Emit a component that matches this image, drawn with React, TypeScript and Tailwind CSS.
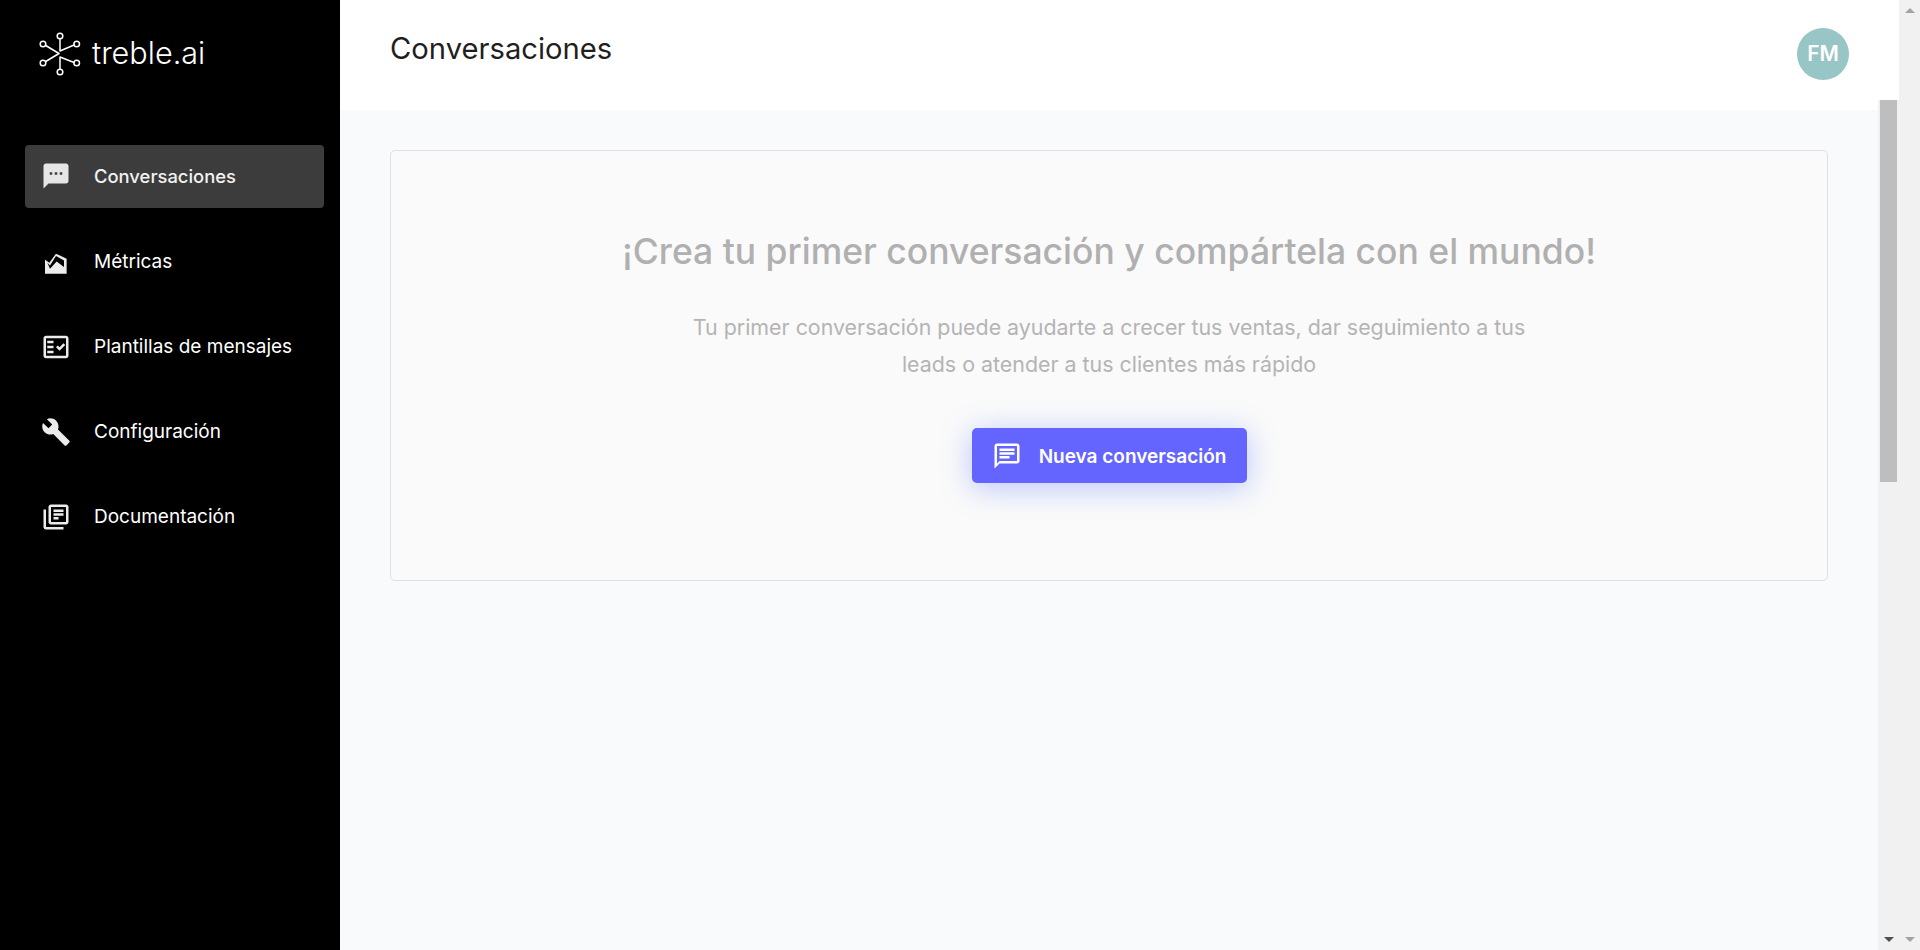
const FONT = "font-['Inter',sans-serif]";

function TrebleLogo() {
  const nodes = [
    [22, 6], [38.7, 14], [38.7, 33], [22, 42], [5, 33], [5, 14],
  ];
  return (
    <svg width="44" height="48" viewBox="0 0 44 48" fill="none" stroke="white" strokeWidth="1.5">
      {nodes.map(([x, y]) => (
        <circle key={`${x}-${y}`} cx={x} cy={y} r="2.8" />
      ))}
      <path d="M22 9v12l14-6M7.7 15.5L21 23.5L7.7 31.5M22 39V27l14 5.5" strokeLinecap="round" strokeLinejoin="round" />
    </svg>
  );
}

function SmsIcon({ className }: { className?: string }) {
  return (
    <svg viewBox="0 0 24 24" className={className} fill="currentColor">
      <path d="M20 2H4c-1.1 0-1.99.9-1.99 2L2 22l4-4h14c1.1 0 2-.9 2-2V4c0-1.1-.9-2-2-2zM9 11H7V9h2v2zm4 0h-2V9h2v2zm4 0h-2V9h2v2z" />
    </svg>
  );
}

function AreaIcon({ className }: { className?: string }) {
  return (
    <svg viewBox="0 0 24 24" className={className} fill="currentColor">
      <path
        fillRule="evenodd"
        d="M3.2 10.1L6.7 12.5L12 5.3L20.5 9.3V21.3H3.2ZM5.1 12.5L7.2 17.3L12.5 11.5L18.4 16V10.7L12 7.2L7.2 14.7Z"
      />
    </svg>
  );
}

function FactCheckIcon({ className }: { className?: string }) {
  return (
    <svg viewBox="0 0 24 24" className={className} fill="currentColor">
      <path d="M20 3H4C2.9 3 2 3.9 2 5v14c0 1.1.9 2 2 2h16c1.1 0 2-.9 2-2V5C22 3.9 21.1 3 20 3zM20 19H4V5h16V19z" />
      <path d="M19.41 10.42L17.99 9l-3.17 3.17-1.41-1.42L12 12.16 14.82 15z" />
      <rect x="5" y="7" width="5" height="2" />
      <rect x="5" y="11" width="5" height="2" />
      <rect x="5" y="15" width="5" height="2" />
    </svg>
  );
}

function BuildIcon({ className }: { className?: string }) {
  return (
    <svg viewBox="0 0 24 24" className={className} fill="currentColor">
      <path d="M22.7 19l-9.1-9.1c.9-2.3.4-5-1.5-6.9-2-2-5-2.4-7.4-1.3L9 6 6 9 1.6 4.7C.4 7.1.9 10.1 2.9 12.1c1.9 1.9 4.6 2.4 6.9 1.5l9.1 9.1c.4.4 1 .4 1.4 0l2.3-2.3c.5-.4.5-1.1.1-1.4z" />
    </svg>
  );
}

function BooksIcon({ className }: { className?: string }) {
  return (
    <svg viewBox="0 0 24 24" className={className} fill="currentColor">
      <path d="M4 6H2v14c0 1.1.9 2 2 2h14v-2H4V6zm16-4H8c-1.1 0-2 .9-2 2v12c0 1.1.9 2 2 2h12c1.1 0 2-.9 2-2V4c0-1.1-.9-2-2-2zm0 14H8V4h12v12zM10 9h8v2h-8zm0 3h4v2h-4zm0-6h8v2h-8z" />
    </svg>
  );
}

function ChatIcon({ className }: { className?: string }) {
  return (
    <svg viewBox="0 0 24 24" className={className} fill="currentColor">
      <path d="M20 2H4c-1.1 0-2 .9-2 2v18l4-4h14c1.1 0 2-.9 2-2V4c0-1.1-.9-2-2-2zm0 14H6l-2 2V4h16v12z" />
      <path d="M6 12h8v2H6zM6 9h12v2H6zM6 6h12v2H6z" />
    </svg>
  );
}

const navItems = [
  { label: 'Métricas', icon: AreaIcon },
  { label: 'Plantillas de mensajes', icon: FactCheckIcon },
  { label: 'Configuración', icon: BuildIcon },
  { label: 'Documentación', icon: BooksIcon },
];

function Sidebar() {
  return (
    <aside className="w-[340px] shrink-0 bg-black text-white flex flex-col">
      <div className="h-[145px] pl-[38px] pt-[30px] flex items-start gap-[10px]">
        <TrebleLogo />
        <span className="text-[30.6px] leading-[46px] font-light text-white">treble.ai</span>
      </div>
      <nav className="pl-[25px] pr-[16px] flex flex-col">
        <a className="h-[63px] rounded-[4px] bg-[#3c3c3c] flex items-center pl-[16px] gap-[23px] text-[#f2f2f2]">
          <SmsIcon className="w-[30px] h-[30px] mb-[2px] text-[#e6e6e6]" />
          <span className="text-[18.4px] font-medium">Conversaciones</span>
        </a>
        {navItems.map(({ label, icon: Icon }) => (
          <a key={label} className="h-[63px] mt-[22px] flex items-center pl-[16px] gap-[23px]">
            <Icon className="w-[30px] h-[30px] text-[#ececec]" />
            <span className="text-[19px] pt-[2px]">{label}</span>
          </a>
        ))}
      </nav>
    </aside>
  );
}

function TopBar() {
  return (
    <header className="h-[100px] shrink-0 bg-white flex items-start justify-between pl-[50px] pr-[50px]">
      <h1 className="text-[29.2px] leading-[40px] mt-[29px] text-[#1f1f1f]">Conversaciones</h1>
      <div className="w-[52px] h-[52px] mt-[28px] rounded-full bg-[#98c5c5] text-white text-[21px] font-semibold flex items-center justify-center">
        FM
      </div>
    </header>
  );
}

function EmptyState() {
  return (
    <section className="h-[431px] rounded-[5px] border border-[#dfdfe5] bg-[#fafafa] flex flex-col items-center pt-[76px]">
      <h2 className="text-[35.5px] leading-[50px] font-medium text-[#b0b0b0]">
        ¡Crea tu primer conversación y compártela con el mundo!
      </h2>
      <p className="mt-[32px] w-[860px] text-center text-[21.4px] leading-[37px] text-[#b4b4b4]">
        Tu primer conversación puede ayudarte a crecer tus ventas, dar seguimiento a tus leads o atender a tus clientes más rápido
      </p>
      <button className="mt-[45px] w-[275px] h-[55px] rounded-[5px] bg-[#6464ff] text-white flex items-center justify-center gap-[17px] shadow-[0_5px_30px_rgba(90,120,255,0.4)]">
        <ChatIcon className="w-[30px] h-[30px]" />
        <span className="text-[19px] font-semibold pt-[3px]">Nueva conversación</span>
      </button>
    </section>
  );
}

function Scrollbar({ outer }: { outer?: boolean }) {
  return (
    <div className={outer ? 'w-[21px] shrink-0 bg-[#f1f1f1] flex flex-col justify-between items-center py-[8px]' : 'w-[21px] shrink-0 bg-[#f1f1f1] flex flex-col items-center'}>
      {outer ? (
        <div className="w-0 h-0 border-x-[5px] border-x-transparent border-b-[5px] border-b-[#a3a3a3]" />
      ) : (
        <div className="w-[17px] h-[382px] bg-[#bebebe]" />
      )}
      {outer ? (
        <div className="w-0 h-0 border-x-[5px] border-x-transparent border-t-[5px] border-t-[#a3a3a3]" />
      ) : (
        <div className="mt-auto mb-[8px] w-0 h-0 border-x-[5px] border-x-transparent border-t-[5px] border-t-[#505050]" />
      )}
    </div>
  );
}

export default function App() {
  return (
    <div className={`${FONT} h-[950px] w-full flex overflow-hidden`}>
      <Sidebar />
      <div className="flex-1 min-w-0 flex flex-col">
        <TopBar />
        <div className="flex-1 min-h-0 flex">
          <main className="flex-1 min-w-0 bg-[#f9fafc]">
            <div className="h-[10px] bg-white" />
            <div className="pl-[50px] pr-[50px] pt-[40px]">
              <EmptyState />
            </div>
          </main>
          <Scrollbar />
        </div>
      </div>
      <Scrollbar outer />
    </div>
  );
}
